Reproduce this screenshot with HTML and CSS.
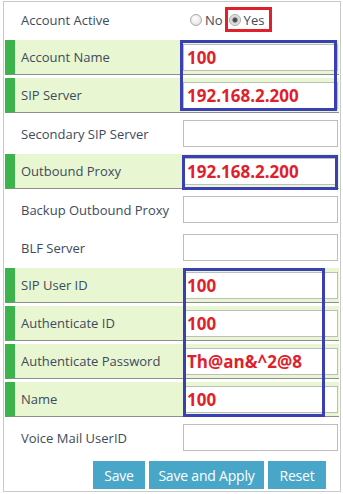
FILE: index.html
```html
<!DOCTYPE html>
<html lang="en">
<head>
    <meta charset="UTF-8">
    <meta name="viewport" content="width=device-width, initial-scale=1.0">
    <title>Account Settings</title>
    <link rel="stylesheet" href="styles.css">
</head>
<body>
    <div class="panel">
        <div class="row">
            <label>Account Active</label>
            <div class="radios">
                <input type="radio" name="active" id="activeNo"><label for="activeNo">No</label>
                <input type="radio" name="active" id="activeYes" checked><label for="activeYes">Yes</label>
            </div>
        </div>
        <div class="row req">
            <label>Account Name</label>
            <input type="text" value="100">
        </div>
        <div class="row req">
            <label>SIP Server</label>
            <input type="text" value="192.168.2.200">
        </div>
        <div class="row">
            <label>Secondary SIP Server</label>
            <input type="text">
        </div>
        <div class="row req">
            <label>Outbound Proxy</label>
            <input type="text" value="192.168.2.200">
        </div>
        <div class="row">
            <label>Backup Outbound Proxy</label>
            <input type="text">
        </div>
        <div class="row">
            <label>BLF Server</label>
            <input type="text">
        </div>
        <div class="row req">
            <label>SIP User ID</label>
            <input type="text" value="100">
        </div>
        <div class="row req">
            <label>Authenticate ID</label>
            <input type="text" value="100">
        </div>
        <div class="row req">
            <label>Authenticate Password</label>
            <input type="text" value="Th@an&amp;^2@8">
        </div>
        <div class="row req">
            <label>Name</label>
            <input type="text" value="100">
        </div>
        <div class="row">
            <label>Voice Mail UserID</label>
            <input type="text">
        </div>
        <div class="actions">
            <button type="button" class="btn-save">Save</button>
            <button type="button" class="btn-apply">Save and Apply</button>
            <button type="button" class="btn-reset">Reset</button>
        </div>

        <!-- annotation marks -->
        <div class="mark red mark-yes"></div>
        <div class="mark blue mark-server"></div>
        <div class="mark blue mark-proxy"></div>
        <div class="mark blue mark-auth"></div>
    </div>
</body>
</html>
```

FILE: styles.css
```css
:root {
    --label-color: #3d4b5c;
    --req-bar: #3cb44b;
    --req-bg: #e8f6d2;
    --value-color: #e01f2d;
    --button-bg: #48a6c8;
}

* {
    margin: 0;
    padding: 0;
    box-sizing: border-box;
}

body {
    background: #ffffff;
    font-family: 'Open Sans', sans-serif;
    font-size: 13px;
}

.panel {
    position: relative;
    width: 338px;
    margin: 1px 0 0 3px;
    padding: 0 1px;
    border: 1px solid #c9c9c9;
}

.row {
    display: flex;
    align-items: center;
    height: 35px;
    margin-bottom: 3px;
    border-left: 10px solid transparent;
    padding-right: 1px;
}

.row.req {
    background: var(--req-bg);
    border-left-color: var(--req-bar);
    border-bottom: 1px solid #8e8e8e;
}

.row > label {
    width: 170px;
    padding-left: 6px;
    color: var(--label-color);
    white-space: nowrap;
}

.row input[type="text"] {
    width: 155px;
    height: 27px;
    border: 1px solid #bdbdbd;
    background: #ffffff;
    padding: 0 3px;
    font-family: 'Open Sans', sans-serif;
    font-size: 17px;
    font-weight: 700;
    color: var(--value-color);
    outline: none;
}

.radios {
    display: flex;
    align-items: center;
    padding-left: 5px;
    color: var(--label-color);
}

.radios input {
    appearance: none;
    width: 12px;
    height: 12px;
    border: 1px solid #a9a9a9;
    border-radius: 50%;
    background: radial-gradient(circle at 40% 35%, #ffffff, #dcdcdc);
    margin-right: 3px;
}

.radios input:checked {
    background: radial-gradient(circle, #444 0, #555 2px, #cfcfcf 3px, #f4f4f4 6px);
}

.radios label {
    margin-right: 6px;
}

.actions {
    display: flex;
    justify-content: flex-end;
    gap: 4px;
    height: 33px;
    padding: 3px 13px 0 0;
}

.actions button {
    height: 28px;
    padding: 0;
    background: var(--button-bg);
    color: #ffffff;
    border: none;
    font-family: 'Open Sans', sans-serif;
    font-size: 14px;
    letter-spacing: -0.2px;
}

.btn-save {
    width: 52px;
}

.btn-apply {
    width: 115px;
}

.btn-reset {
    width: 58px;
}

.mark {
    position: absolute;
    border: 3px solid;
}

.mark.red {
    border-color: #e0202a;
}

.mark.blue {
    border-color: #3b3fb4;
}

.mark-yes {
    left: 221px;
    top: 5px;
    width: 47px;
    height: 25px;
}

.mark-server {
    left: 176px;
    top: 38px;
    width: 157px;
    height: 71px;
}

.mark-proxy {
    left: 178px;
    top: 153px;
    width: 156px;
    height: 35px;
}

.mark-auth {
    left: 179px;
    top: 266px;
    width: 142px;
    height: 149px;
}
```
